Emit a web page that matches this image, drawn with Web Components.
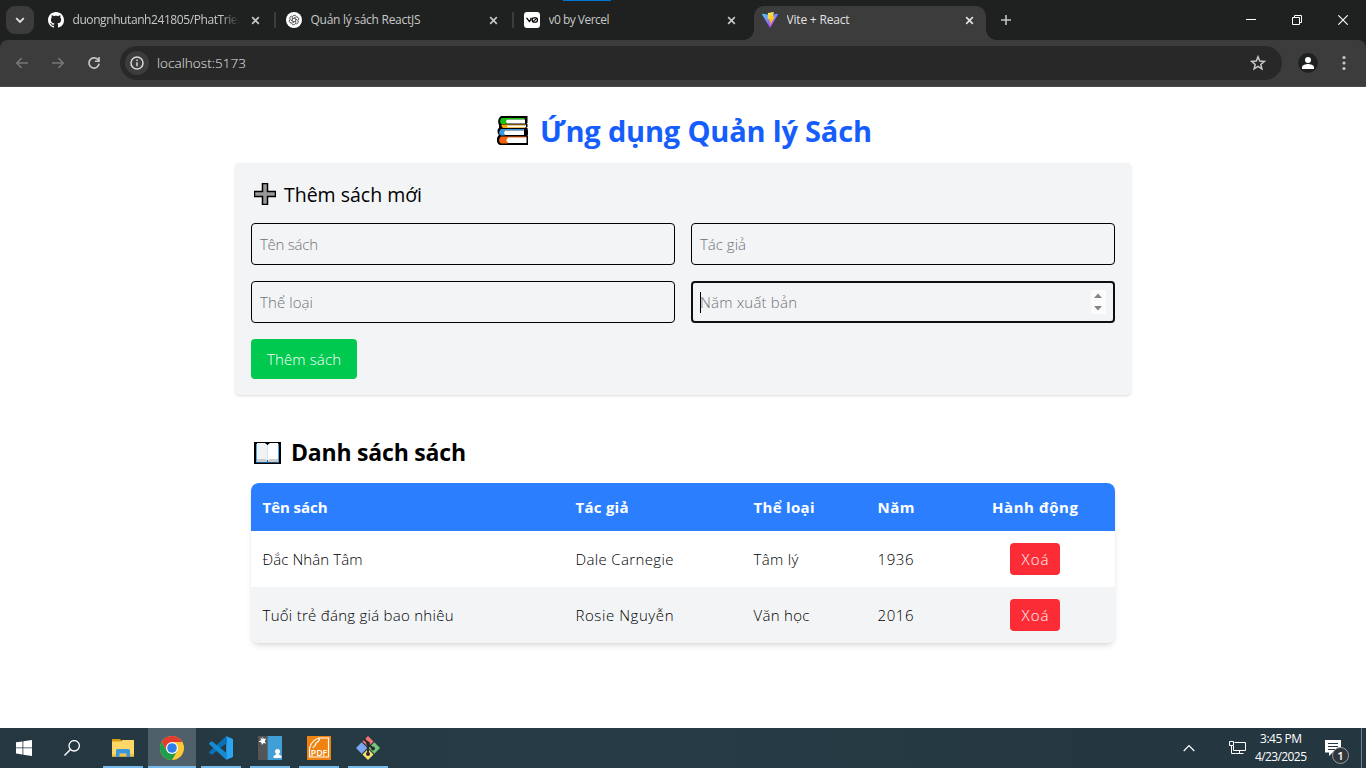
<!DOCTYPE html>
<html lang="vi">
<head>
<meta charset="utf-8">
<title>Vite + React</title>
<style>
html,body{margin:0;height:768px;overflow:hidden;background:#fff}
body{font-family:"Open Sans","Noto Sans",sans-serif;color:#000}
</style>
</head>
<body>
<desktop-screen></desktop-screen>
<script>
const define=(name,html,setup)=>customElements.define(name,class extends HTMLElement{
  connectedCallback(){
    if(this.shadowRoot)return;
    const t=document.createElement('template');
    t.innerHTML=html;
    this.attachShadow({mode:'open'}).append(t.content.cloneNode(true));
    if(setup)setup(this,this.shadowRoot);
  }
});

/* A run of text spaced to an exact width (w, in px). */
define('fit-text',`<style>:host{display:inline-block;white-space:pre;flex:none}span{display:inline-block;white-space:pre}</style><span><slot></slot></span>`,
(el,root)=>{
  const w=+el.getAttribute('w'),s=root.querySelector('span'),n=[...el.textContent].length;
  const nat=s.getBoundingClientRect().width;
  s.style.letterSpacing=((w-nat)/(n-1))+'px';
  el.style.width=w+'px';
});

/* Icon set */
const icons={
 down:['0 0 12 12','<path d="M2.2 4.2 6 8l3.800-3.800" fill="none" stroke="#e3e3e3" stroke-width="1.800"/>'],
 close:['0 0 10 10','<path d="M1.300 1.300 8.700 8.700M8.700 1.300 1.300 8.700" fill="none" stroke="currentColor" stroke-width="1.800"/>'],
 plus:['0 0 12 12','<path d="M6 1v10M1 6h10" fill="none" stroke="#c4c4c4" stroke-width="1.600"/>'],
 github:['0 0 16 16','<path fill="#fff" d="M8 0C3.580 0 0 3.580 0 8c0 3.540 2.290 6.530 5.470 7.590.4.070.55-.17.55-.38 0-.19-.01-.82-.01-1.490-2.010.37-2.530-.49-2.690-.94-.09-.23-.48-.94-.82-1.130-.28-.15-.68-.52-.01-.53.63-.01 1.080.58 1.230.82.72 1.210 1.870.87 2.330.66.07-.52.28-.87.51-1.070-1.780-.2-3.640-.89-3.640-3.950 0-.87.31-1.590.82-2.150-.08-.2-.36-1.020.08-2.120 0 0 .67-.21 2.200.82.64-.18 1.320-.27 2-.27s1.360.09 2 .27c1.530-1.040 2.200-.82 2.200-.82.44 1.100.16 1.920.08 2.120.51.56.82 1.270.82 2.150 0 3.070-1.870 3.750-3.650 3.950.29.25.54.73.54 1.480 0 1.070-.01 1.930-.01 2.200 0 .21.15.46.55.38A8.010 8.010 0 0 0 16 8c0-4.420-3.580-8-8-8z"/>'],
 gpt:['0 0 16 16','<circle cx="8" cy="8" r="8" fill="#fff"/><g fill="none" stroke="#222" stroke-width=".7"><path d="M6.300 8.900V5.300a2.200 2.200 0 0 1 4-1.200"/><path transform="rotate(60 8 8)" d="M6.300 8.900V5.300a2.200 2.200 0 0 1 4-1.200"/><path transform="rotate(120 8 8)" d="M6.300 8.900V5.300a2.200 2.200 0 0 1 4-1.200"/><path transform="rotate(180 8 8)" d="M6.300 8.900V5.300a2.200 2.200 0 0 1 4-1.200"/><path transform="rotate(240 8 8)" d="M6.300 8.900V5.300a2.200 2.200 0 0 1 4-1.200"/><path transform="rotate(300 8 8)" d="M6.300 8.900V5.300a2.200 2.200 0 0 1 4-1.200"/></g>'],
 vzero:['0 0 16 16','<rect width="16" height="16" rx="3" fill="#fff"/><path d="M2.500 5.800 5.400 9.400 7 7.500V5.800" fill="none" stroke="#000" stroke-width="1.300"/><rect x="8.200" y="5.800" width="5.200" height="4.400" rx="1.600" fill="none" stroke="#000" stroke-width="1.300"/><path d="m8.900 9.700 3.900-3.400" stroke="#000" stroke-width="1.100"/>'],
 vite:['0 0 16 16','<defs><linearGradient id="a" x1="0" y1="0" x2=".65" y2="1"><stop stop-color="#41d1ff"/><stop offset="1" stop-color="#bd34fe"/></linearGradient><linearGradient id="b" x1=".4" y1="0" x2=".6" y2="1"><stop stop-color="#ffea83"/><stop offset=".2" stop-color="#ffdd35"/><stop offset="1" stop-color="#ffa800"/></linearGradient></defs><path d="M15.900 2.400 8.500 15.600a.4.4 0 0 1-.7 0L.1 2.400a.4.4 0 0 1 .4-.6L8 3.100l7.500-1.300a.4.400 0 0 1 .4.600z" fill="url(#a)"/><path d="m11.700 0-5.500 1.100-.2.200-.4 5.700.3.200 1.500-.3.2.3-.4 2.200.2.200 1-.3.2.3-.7 3.500.4.100L12.700 4.800l-.2-.3-1.600.3-.2-.3 1.200-4.200z" fill="url(#b)"/>'],
 back:['0 0 16 16','<path d="M14 8H3M7.700 3 2.700 8l5 5" fill="none" stroke="#777" stroke-width="1.500"/>'],
 fwd:['0 0 16 16','<path d="M2 8h11M8.300 3l5 5-5 5" fill="none" stroke="#777" stroke-width="1.500"/>'],
 reload:['0 0 16 16','<path d="M13.100 8.700a5.100 5.100 0 1 1-1.400-4.300l1.500 1.500" fill="none" stroke="#c7c7c7" stroke-width="1.700"/><path d="M13.800 2v5H8.900V5.400h3.300V2z" fill="#c7c7c7"/>'],
 info:['0 0 16 16','<circle cx="8" cy="8" r="6" fill="none" stroke="#d8d8d8" stroke-width="1.500"/><path d="M8 7.200v4M8 4.600v1.500" stroke="#d8d8d8" stroke-width="1.500"/>'],
 star:['0 0 16 16','<path d="m8 1.800 1.700 4.300 4.600.3-3.500 3 1.100 4.500L8 11.400l-3.900 2.500 1.100-4.500-3.500-3 4.600-.3z" fill="none" stroke="#c7c7c7" stroke-width="1.500"/>'],
 user:['0 0 20 20','<circle cx="10" cy="10" r="10" fill="#1f2120"/><circle cx="10" cy="7" r="3" fill="#fff"/><path d="M4 16v-1.800c0-2 4-3.200 6-3.200s6 1.200 6 3.200V16z" fill="#fff"/>'],
 dots:['0 0 4 16','<g fill="#c7c7c7"><circle cx="2" cy="2.500" r="1.600"/><circle cx="2" cy="8" r="1.600"/><circle cx="2" cy="13.500" r="1.600"/></g>'],
 min:['0 0 10 10','<path d="M0 4h10v1H0z" fill="#fff"/>'],
 max:['0 0 10 10','<path d="M.5 2.500h7v7h-7zM2.500 2.500v-2h7v7h-2" fill="none" stroke="#fff"/>'],
 quit:['0 0 10 10','<path d="m.3.3 9.400 9.400M9.700.3.3 9.700" fill="none" stroke="#fff" stroke-width="1.100"/>'],
 books:['0 0 31 30','<g stroke-linejoin="round"><path d="M4 0h26.500v7l-1 1h1v3l-1.500 1h1.500l1 7-1.500 1h1v9H3c-4-1-4-8-1-10-2-2-2-6 0-7V9C.5 6.500 1 2 4 0z" fill="#000"/><path d="M4.500 2h23v1.500H10q-2 2 0 4.500H4.500Q1.500 5.500 4.500 2z" fill="#16c60c"/><path d="M10 3.500h18v4H10q-2-2 0-4z" fill="#fff"/><path d="M4.500 8.500H29v1H10V11h18v1H6q-2-1.500-1.500-3.500z" fill="#f7a900"/><path d="M10 9.300h19v2H10z" fill="#fff"/><path d="M4 13h23v1.500H8q-2 2 0 5H4q-4-2.500 0-6.500z" fill="#3a96dd"/><path d="M8 14.500h19v4.500H8q-2-2 0-4.500z" fill="#fff"/><path d="M4 20.500h25.500V22H11q-2 2.500 0 5.500H4q-4-3 0-7z" fill="#f7630c"/><path d="M11 21.500h18.500V27H11q-3-2.500 0-5.500z" fill="#fff"/></g>'],
 add:['0 0 22 22','<path d="M8.500.5h5v8h8v5h-8v8h-5v-8h-8v-5h8z" fill="#999" stroke="#000" stroke-width="1.500"/>'],
 openbook:['0 0 27 22','<path d="M0 0h27v22H0z" fill="#000"/><path d="M2 2h23v18.500H2z" fill="#48a9f0"/><path d="M3 1h8.500l2 2v16H3z" fill="#f2f2f2"/><path d="M15.500 1H24v18H13.500V3z" fill="#fff"/><path d="M3 17h8.500l2 2v1H3zM24 17h-8.500l-2 2v1H24z" fill="#ccc"/><path d="M11 1h5l-2.500 2z" fill="#000"/><path d="M13 18h1v3h-1z" fill="#0078d7"/>'],
 win:['0 0 16 16','<path d="M0 2.300 6.500 1.400v6.100H0zM7.300 1.300 16 0v7.500H7.300zM0 8.300h6.500v6.200L0 13.600zM7.300 8.300H16V16l-8.700-1.300z" fill="#fff"/>'],
 search:['0 0 16 16','<circle cx="10.200" cy="5.800" r="5.200" fill="none" stroke="#fff" stroke-width="1.300"/><path d="M6.400 9.600.5 15.500" stroke="#fff" stroke-width="1.400"/>'],
 folder:['0 0 22 18','<path d="M0 0h8l1.500 1.500V3H0z" fill="#d99a10"/><path d="M0 2.500h9L10.500 1H22v16.500H0z" fill="#ffd766"/><path d="M0 15h22v2.500H0z" fill="#f5c244"/><path d="M4 18v-6.500Q4 10 5.500 10h11q1.500 0 1.500 1.500V18h-3.500v-3.500h-7V18z" fill="#3a96dd"/>'],
 chrome:['0 0 24 24','<circle cx="12" cy="12" r="12" fill="#fcc934"/><path d="M12 6 6.800 15 1.600 6A12 12 0 0 1 22.400 6z" fill="#e33b2e"/><path d="M1.600 6 6.800 15 12 18l5.200-3L12 24A12 12 0 0 1 1.600 6z" fill="#1e9e4a"/><circle cx="12" cy="12" r="6" fill="#fff"/><circle cx="12" cy="12" r="4.800" fill="#2f7de9"/>'],
 code:['0 0 24 24','<path d="M17.200.2 24 3.200v17.600l-6.800 3z" fill="#29a8f0"/><path d="m17.200.2 1 6.300L3.300 18.400 1.800 18.300.3 17q-.5-.7 0-1.300z" fill="#0b70b8"/><path d="m17.200 23.800 1-6.300L3.300 5.600l-1.500.1L.3 7q-.5.700 0 1.300z" fill="#168bd2"/><path d="M17.200.2 24 3.200v17.600l-6.800 3 .9-1.800V2z" fill="#2ba5ef"/>'],
 contacts:['0 0 24 24','<path d="M0 0h9.500v24H0z" fill="#555"/><path d="M9.500 0H24v24H9.500z" fill="#3f9fd6"/><path d="m4.500.500 1.100 2.300 2.800-.1-1.700 2.300L8 7.500l-2.500-.4L4 9l-.6-2.500L.5 5.600l2.500-1.300L2.500 1.500l2 1.700z" fill="#fff"/><circle cx="19.500" cy="15.500" r="2.500" fill="#fff"/><path d="M15.500 22v-2l2.500-1.500.5-1.500h2l.5 1.500 2.500 1.500v2z" fill="#fff"/>'],
 pdf:['0 0 24 24','<path d="M0 0h24v24H0z" fill="#f0820f"/><path d="M2.500 12.500Q4.500 4 12 2h9.500v10.500M2.500 12.500V21h19v-8.500M5.500 11.500Q8.500 10.500 9 7q3-1 3.500-4.500" fill="none" stroke="#fff" stroke-width="1.200"/><text x="12" y="19.500" text-anchor="middle" font-family="Open Sans" font-weight="600" font-size="8.500" fill="#fff" textLength="16.500" lengthAdjust="spacingAndGlyphs">PDF</text>'],
 git:['0 0 24 24','<path d="m12 0 5.500 5.500-5.500 5.500-5.500-5.500z" fill="#f47373"/><path d="m5.700 6.300 5.500 5.700-5.500 5.700L0 12z" fill="#7aa7f0"/><path d="m18.300 6.300 5.700 5.700-5.700 5.700-5.700-5.700z" fill="#77c77b"/><path d="m12 13 5.500 5.500L12 24l-5.500-5.500z" fill="#fbe06d"/><path d="m8 3 4 4v11M12 8l5 4.500" fill="none" stroke="#2b2b2b" stroke-width="1.900"/><g fill="#2b2b2b"><circle cx="12" cy="7.500" r="2"/><circle cx="17" cy="12.500" r="2"/><circle cx="12" cy="18" r="2"/></g>'],
 up:['0 0 12 8','<path d="M.7 7 6 1.500 11.300 7" fill="none" stroke="#fff" stroke-width="1.200"/>'],
 net:['0 0 17 14','<g fill="none" stroke="#fff"><path d="M5.500 1.500h11v8h-12V5M10.500 9.500v3M6.500 12.500h8M.5.500h4v4h-4zM2.500 4.500v8h4"/></g>'],
 note:['0 0 16 16','<path d="M0 0h16v12.500H7.500L4 16v-3.500H0z" fill="#fff"/><path d="M3 3.500h10M3 6.500h10M3 9.500h7" stroke="#263842"/>'],
 spin:['0 0 15 24','<path d="M0 0h15v24H0z" fill="#fcfcfc"/><path d="m3 8 4-4.500L11 8zM3 16l4 4.500 4-4.500z" fill="#858585"/>']
};
define('x-icon','<style>:host{display:block;flex:none}svg{display:block;width:100%;height:100%}</style>',(el,root)=>{
  const [vb,body]=icons[el.getAttribute('name')];
  el.style.width=el.getAttribute('w')+'px';el.style.height=(el.getAttribute('h')||el.getAttribute('w'))+'px';
  const d=document.createElement('div');
  d.style.cssText='width:100%;height:100%';
  d.innerHTML=`<svg viewBox="${vb}" preserveAspectRatio="none" aria-hidden="true">${body}</svg>`;
  root.append(d);
});

define('browser-tab',`<style>
:host{display:flex;position:relative;box-sizing:border-box;width:232px;height:34px;padding:0 12px 6px 8px;align-items:center;color:#c8c8c8;font-size:12px;line-height:16px;border-radius:10px 10px 0 0}
:host([active]){background:#3c3c3c;color:#e3e3e3}
:host([active])::before,:host([active])::after{content:"";position:absolute;bottom:0;width:10px;height:10px}
:host([active])::before{left:-10px;background:radial-gradient(circle at 0 0,transparent 9.500px,#3c3c3c 10px)}
:host([active])::after{right:-10px;background:radial-gradient(circle at 100% 0,transparent 9.500px,#3c3c3c 10px)}
.t{flex:1;min-width:0;margin:0 12px 0 8.500px;overflow:hidden;white-space:nowrap}
:host([fade]) .t{-webkit-mask-image:linear-gradient(90deg,#000 calc(100% - 22px),transparent);mask-image:linear-gradient(90deg,#000 calc(100% - 18px),transparent)}
</style><slot name="icon"></slot><div class="t"><slot></slot></div><x-icon name="close" w="9"></x-icon>`);

define('tab-strip',`<style>
:host{display:flex;position:relative;height:40px;background:#1f2120;align-items:flex-end}
.drop{width:28px;height:28px;border-radius:9px;background:#3c3c3c;display:grid;place-items:center;margin:0 6px 6px}
i{width:2px;height:16px;background:#3c3c3c;margin:0 2px 12px}
.gap{width:6px}
.plus{margin:0 0 14px 14px}
.win{margin-left:auto;display:flex;height:40px;align-items:center;gap:36px;padding-right:18px}
.mark{position:absolute;top:0;left:563px;width:48px;height:1px;background:#0078d7}
</style><div class="drop"><x-icon name="down" w="12"></x-icon></div>
<browser-tab fade><x-icon slot="icon" name="github" w="16"></x-icon><fit-text w="172">duongnhutanh241805/PhatTrien</fit-text></browser-tab><i></i>
<browser-tab><x-icon slot="icon" name="gpt" w="16"></x-icon><fit-text w="110">Quản lý sách ReactJS</fit-text></browser-tab><i></i>
<browser-tab><x-icon slot="icon" name="vzero" w="16"></x-icon><fit-text w="61">v0 by Vercel</fit-text></browser-tab><div class="gap"></div>
<browser-tab active><x-icon slot="icon" name="vite" w="16"></x-icon><fit-text w="63">Vite + React</fit-text></browser-tab>
<x-icon class="plus" name="plus" w="12"></x-icon>
<div class="win"><x-icon name="min" w="10"></x-icon><x-icon name="max" w="10"></x-icon><x-icon name="quit" w="10"></x-icon></div><div class="mark"></div>`);

define('address-bar',`<style>
:host{display:block;background:#1f2120;height:47px}
.bar{display:flex;box-sizing:border-box;height:47px;padding:0 20px 1px 14px;background:#3c3c3c;border-bottom:1px solid #484848;border-radius:8px 8px 0 0;align-items:center}
.nav{display:flex;gap:20px;margin-right:18px}
.box{flex:1;height:34px;border-radius:17px;background:#282828;display:flex;align-items:center;padding:0 16px 0 5px;color:#e8e8e8;font-size:13.500px;font-weight:350;box-sizing:border-box}
.info{width:24px;height:24px;border-radius:12px;background:#3c3c3c;display:grid;place-items:center;margin-right:8px}
.star{margin-left:auto}
.user{margin:0 24px 0 16px}
</style><div class="bar"><div class="nav"><x-icon name="back" w="16"></x-icon><x-icon name="fwd" w="16"></x-icon><x-icon name="reload" w="16"></x-icon></div>
<div class="box"><div class="info"><x-icon name="info" w="16"></x-icon></div><fit-text w="89">localhost:5173</fit-text><x-icon class="star" name="star" w="16"></x-icon></div>
<x-icon class="user" name="user" w="20"></x-icon><x-icon name="dots" w="4" h="16"></x-icon></div>`);

define('form-field',`<style>
:host{display:flex;box-sizing:border-box;height:42px;border:1px solid #000;border-radius:4px;padding:0 8px;align-items:center;color:#707276;font-size:15px;font-weight:300}
:host([focused]){border:2px solid #101010;padding:0 7px}
.caret,.spin{display:none}
:host([focused]) .caret{display:block;width:1px;height:21px;background:#000;margin-right:-1px}
:host([focused]) .spin{display:block;margin-left:auto}
</style><span class="caret"></span><slot></slot><x-icon class="spin" name="spin" w="15" h="24"></x-icon>`);

define('book-form',`<style>
:host{display:block;box-sizing:border-box;width:896px;height:232px;padding:16px;background:#f3f4f6;border-radius:4px;box-shadow:0 1px 3px rgba(0,0,0,.1),0 1px 2px -1px rgba(0,0,0,.1)}
h2{display:flex;align-items:center;box-sizing:border-box;margin:0 0 16px;padding:4px 0 0 3px;height:28px;gap:8px;font-size:19.500px;font-weight:500;line-height:28px}
h2 x-icon{margin-top:-2px}
.grid{display:grid;grid-template-columns:1fr 1fr;gap:16px}
button{display:block;margin:16px 0 0;width:106px;height:40px;border:0;border-radius:4px;background:#00c950;color:#fff;font:300 15px/40px "Open Sans","Noto Sans",sans-serif;padding:0 16px;text-align:left}
</style><h2><x-icon name="add" w="22"></x-icon><fit-text w="138">Thêm sách mới</fit-text></h2>
<div class="grid"><form-field><fit-text w="58">Tên sách</fit-text></form-field><form-field><fit-text w="46">Tác giả</fit-text></form-field><form-field><fit-text w="53">Thể loại</fit-text></form-field><form-field focused><fit-text w="97">Năm xuất bản</fit-text></form-field></div>
<button><fit-text w="74">Thêm sách</fit-text></button>`);

define('book-row',`<style>
:host{display:grid;grid-template-columns:313px 178px 124px 89px 160px;height:56px;align-items:center;background:#fff;font-size:15px;font-weight:350}
:host([odd]){background:#f3f4f6}
:host([head]){height:48px;background:#2b7fff;color:#fff;font-weight:700}
::slotted(*){margin-left:11.500px}
::slotted(:last-child){justify-self:center;margin-left:0}
</style><slot></slot>`);
define('delete-button',`<style>
:host{display:block}button{display:block;width:50px;height:32px;border:0;padding:0 11.500px;border-radius:4px;background:#fb2c36;color:#fff;font:300 15px/32px "Open Sans","Noto Sans",sans-serif;text-align:left}
</style><button><fit-text w="27">Xoá</fit-text></button>`);

define('book-list',`<style>
:host{display:block;width:864px}
h2{display:flex;align-items:center;gap:10px;height:32px;margin:0 0 14px;padding-left:3px;font-size:23px;line-height:32px;font-weight:700}
h2 fit-text{margin-top:-2px}
.table{border-radius:8px;overflow:hidden;box-shadow:0 4px 6px -1px rgba(0,0,0,.1),0 2px 4px -2px rgba(0,0,0,.1)}
</style><h2><x-icon name="openbook" w="27" h="22"></x-icon><fit-text w="175">Danh sách sách</fit-text></h2>
<div class="table">
<book-row head><fit-text w="65">Tên sách</fit-text><fit-text w="53">Tác giả</fit-text><fit-text w="61">Thể loại</fit-text><fit-text w="37">Năm</fit-text><fit-text w="86">Hành động</fit-text></book-row>
<book-row><fit-text w="100">Đắc Nhân Tâm</fit-text><fit-text w="98">Dale Carnegie</fit-text><fit-text w="45">Tâm lý</fit-text><fit-text w="36">1936</fit-text><delete-button></delete-button></book-row>
<book-row odd><fit-text w="191">Tuổi trẻ đáng giá bao nhiêu</fit-text><fit-text w="98">Rosie Nguyễn</fit-text><fit-text w="56">Văn học</fit-text><fit-text w="36">2016</fit-text><delete-button></delete-button></book-row>
</div>`);

define('book-page',`<style>
:host{display:flex;flex-direction:column;align-items:center;height:641px;background:#fff;box-sizing:border-box;padding-top:24px}
h1{display:flex;align-items:center;gap:12px;margin:0 0 16px;height:36px;font-size:29px;line-height:36px;color:#155dfc;padding-left:3px}
h1 x-icon{margin-top:4px}
h1 fit-text{margin-top:4px}
book-list{margin-top:42px}
</style><h1><x-icon name="books" w="31" h="30"></x-icon><fit-text w="332">Ứng dụng Quản lý Sách</fit-text></h1><book-form></book-form><book-list></book-list>`);

define('task-button',`<style>
:host{display:grid;box-sizing:border-box;width:48px;height:40px;place-items:center;position:relative}
:host([open])::after{content:"";position:absolute;left:4px;right:4px;bottom:0;height:2px;background:#76b9ed}
:host([active]){background:#50606a}
:host([active])::after{left:0;right:0}
</style><slot></slot>`);
define('task-bar',`<style>
:host{display:flex;height:40px;background:linear-gradient(90deg,#253842,#263b45 45%,#243640);color:#fff;font-size:12px}
.apps{display:flex;gap:1px;margin-left:3px}
.tray{margin-left:auto;display:flex;align-items:center}
.clock{width:60px;margin:0 14px 0 5px;display:flex;flex-direction:column;align-items:center;line-height:18px}
.note{position:relative;margin:0 20px 0 0}
.badge{position:absolute;left:7px;top:7px;width:15px;height:15px;line-height:15px;border-radius:50%;border:1px solid #9a9fa2;background:#30363a;text-align:center;font-size:11.500px;font-weight:600}
.end{width:1px;height:40px;background:#728088;margin-right:4px}
</style><task-button><x-icon name="win" w="16"></x-icon></task-button><task-button><x-icon name="search" w="16"></x-icon></task-button>
<div class="apps"><task-button open><x-icon name="folder" w="22" h="18"></x-icon></task-button><task-button open active><x-icon name="chrome" w="24"></x-icon></task-button><task-button open><x-icon name="code" w="24"></x-icon></task-button><task-button open><x-icon name="contacts" w="24"></x-icon></task-button><task-button open><x-icon name="pdf" w="24"></x-icon></task-button><task-button open><x-icon name="git" w="24"></x-icon></task-button></div>
<div class="tray"><x-icon name="up" w="12" h="8" style="margin-right:34px"></x-icon><x-icon name="net" w="17" h="14"></x-icon>
<div class="clock"><fit-text w="42">3:45 PM</fit-text><fit-text w="52">4/23/2025</fit-text></div>
<div class="note"><x-icon name="note" w="16"></x-icon><div class="badge">1</div></div><div class="end"></div></div>`);

define('desktop-screen',`<style>:host{display:grid;grid-template-rows:40px 47px 641px 40px;width:1366px;height:768px;overflow:hidden}</style>
<tab-strip></tab-strip><address-bar></address-bar><book-page></book-page><task-bar></task-bar>`);
</script>
</body>
</html>
